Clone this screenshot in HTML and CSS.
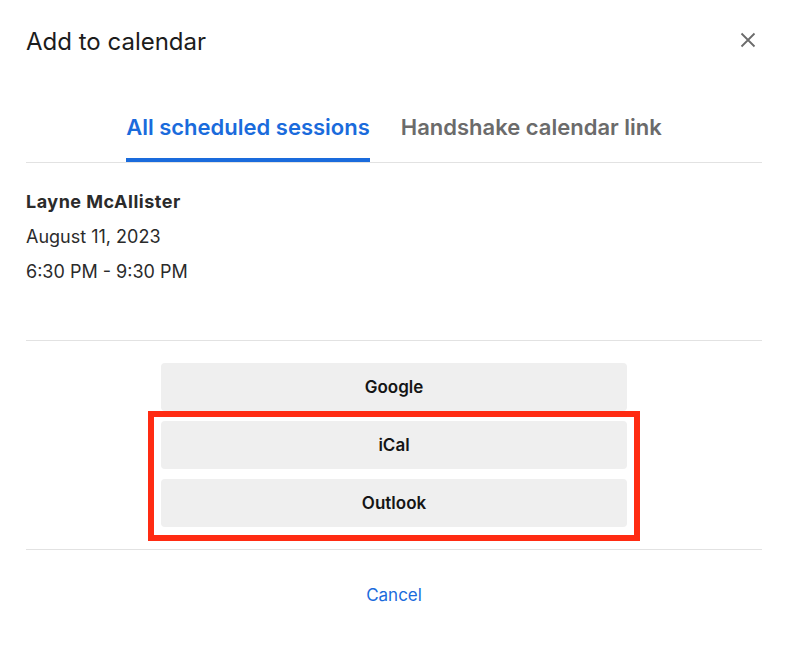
FILE: index.html
```html
<!DOCTYPE html>
<html lang="en">
<head>
  <meta charset="UTF-8">
  <meta name="viewport" content="width=device-width, initial-scale=1.0">
  <title>Add to calendar</title>
  <link rel="stylesheet" href="styles.css">
</head>
<body>
  <div class="dialog">
    <div class="dialog_head">
      <h1 class="title">Add to calendar</h1>
      <button class="close" aria-label="Close">
        <svg width="16" height="16" viewBox="0 0 16 16">
          <path d="M1.5 1.5 L14.5 14.5 M14.5 1.5 L1.5 14.5" stroke="#6b6b6b" stroke-width="1.8" fill="none" />
        </svg>
      </button>
    </div>

    <div class="tabs">
      <div class="tab active">All scheduled sessions</div>
      <div class="tab">Handshake calendar link</div>
    </div>

    <div class="session">
      <div class="name">Layne McAllister</div>
      <div>August 11, 2023</div>
      <div>6:30 PM - 9:30 PM</div>
    </div>

    <div class="providers">
      <button class="provider">Google</button>
      <div class="marked">
        <button class="provider">iCal</button>
        <button class="provider">Outlook</button>
      </div>
    </div>

    <div class="dialog_foot">
      <a href="#close" class="cancel">Cancel</a>
    </div>
  </div>
</body>
</html>
```

FILE: styles.css
```css
body {
  margin: 0;
  background: #fff;
  font-family: Inter, "Noto Sans", sans-serif;
  color: #2b2b2b;
}
.dialog {
  padding: 26px 24px 0 26px;
}
.dialog_head {
  display: flex;
  justify-content: space-between;
  align-items: flex-start;
}
.title {
  margin: 0;
  font-size: 24px;
  line-height: 32px;
  font-weight: 400;
  color: #1c1c1c;
}
.close {
  border: none;
  background: none;
  padding: 0;
  margin: 6px 6px 0 0;
  width: 16px;
  height: 16px;
  cursor: pointer;
}
.close svg {
  display: block;
}
.tabs {
  display: flex;
  justify-content: center;
  gap: 31px;
  margin-top: 57px;
  border-bottom: 1px solid #e2e2e2;
}
.tab {
  font-size: 22px;
  line-height: 24px;
  font-weight: 600;
  color: #6b6b6b;
  padding-bottom: 19px;
  border-bottom: 4px solid transparent;
}
.tab.active {
  color: #1a6bdc;
  border-bottom-color: #1a6bdc;
}
.session {
  padding: 21px 0 51px;
  font-size: 18px;
  line-height: 35px;
  border-bottom: 1px solid #e2e2e2;
}
.name {
  font-weight: 700;
  letter-spacing: 0.5px;
}
.providers {
  display: flex;
  flex-direction: column;
  align-items: center;
  gap: 10px;
  padding: 22px 0;
  border-bottom: 1px solid #e2e2e2;
}
.marked {
  position: relative;
  display: flex;
  flex-direction: column;
  gap: 10px;
}
.marked::after {
  content: "";
  position: absolute;
  top: -10px;
  left: -13px;
  right: -13px;
  bottom: -14px;
  border: 6px solid #ff2b12;
}
.provider {
  width: 466px;
  height: 48px;
  border: none;
  border-radius: 4px;
  background: #efefef;
  font-family: Inter, "Noto Sans", sans-serif;
  font-size: 17px;
  font-weight: 600;
  color: #151515;
  cursor: pointer;
}
.dialog_foot {
  text-align: center;
  padding-top: 33px;
}
.cancel {
  font-size: 17px;
  line-height: 24px;
  color: #1a6bdc;
  text-decoration: none;
}
```
